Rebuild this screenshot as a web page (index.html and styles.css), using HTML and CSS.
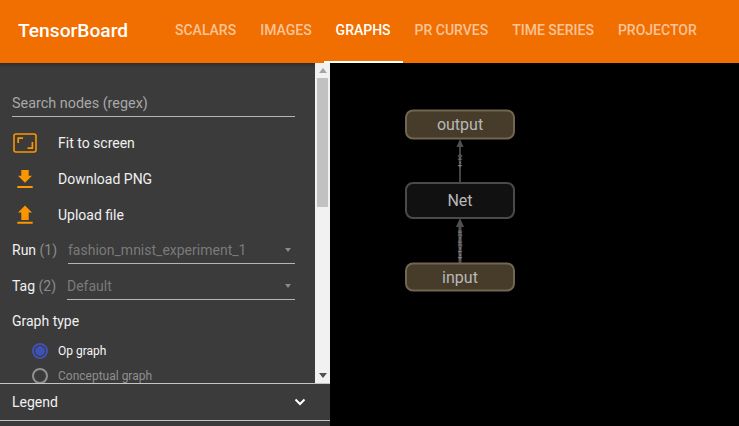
FILE: index.html
```html
<!DOCTYPE html>
<html lang="en">
<head>
<meta charset="utf-8">
<title>TensorBoard</title>
<link rel="stylesheet" href="styles.css">
</head>
<body>
<header class="topbar">
  <div class="brand">TensorBoard</div>
  <nav class="tabs">
    <a class="tab">SCALARS</a>
    <a class="tab">IMAGES</a>
    <a class="tab active">GRAPHS</a>
    <a class="tab">PR CURVES</a>
    <a class="tab">TIME SERIES</a>
    <a class="tab">PROJECTOR</a>
  </nav>
</header>
<main class="main">
  <aside class="sidebar">
    <div class="scroller">
      <div class="controls">
        <div class="search">Search nodes (regex)</div>
        <div class="action">
          <svg class="icon" width="26" height="20" viewBox="0 0 26 20"><rect x="1" y="1" width="22" height="18" rx="2" fill="none" stroke="#fb9600" stroke-width="1.6"/><path d="M5.200 10V5.200H10M19.400 9v6.200h-4.900" fill="none" stroke="#fb9600" stroke-width="1.700"/></svg>
          <span>Fit to screen</span>
        </div>
        <div class="action">
          <svg class="icon" width="26" height="20" viewBox="0 0 26 20"><path d="M8.300 1h7.400v5.800H19l-7 7-7-7h3.300z M4.300 17h15.400v2H4.300z" fill="#fb9600"/></svg>
          <span>Download PNG</span>
        </div>
        <div class="action">
          <svg class="icon" width="26" height="20" viewBox="0 0 26 20"><path d="M8.300 15h7.400V7.500H19L12 .500 5 7.500h3.300z M4.300 16.800h15.400v2H4.300z" fill="#fb9600"/></svg>
          <span>Upload file</span>
        </div>
        <div class="select-row first">
          <span class="select-label">Run <em>(1)</em></span>
          <div class="select run"><span>fashion_mnist_experiment_1</span><i class="caret"></i></div>
        </div>
        <div class="select-row tag">
          <span class="select-label">Tag <em>(2)</em></span>
          <div class="select"><span>Default</span><i class="caret"></i></div>
        </div>
        <div class="group-title">Graph type</div>
        <div class="radio checked"><i class="dot"></i><span>Op graph</span></div>
        <div class="radio"><i class="dot"></i><span>Conceptual graph</span></div>
      </div>
      <div class="scrollbar">
        <i class="arrow up"></i>
        <div class="track"><div class="thumb"></div></div>
        <i class="arrow down"></i>
      </div>
    </div>
    <div class="legend">
      <span>Legend</span>
      <svg width="12" height="8" viewBox="0 0 12 8"><path d="M1.500 1.500 6 6l4.500-4.500" fill="none" stroke="#fff" stroke-width="2"/></svg>
    </div>
  </aside>
  <section class="canvas">
    <svg class="graph" width="409" height="363" viewBox="330 63 409 363">
      <g class="edge">
        <path d="M460 182V144" stroke-width="1.7"/>
        <path d="M460 139l-3.500 8h7z" class="head"/>
        <path d="M460 263V224" stroke-width="3"/>
        <path d="M460 218l-4 9h8z" class="head"/>
      </g>
      <text class="edge-label" transform="translate(462 161) rotate(-90)">4×10</text>
      <text class="edge-label" transform="translate(462 245) rotate(-90)">4×1×28×28</text>
      <rect class="node io" x="406" y="110.500" width="108" height="28" rx="7"/>
      <text class="node-label" x="460" y="129.500">output</text>
      <rect class="node net" x="406" y="183" width="108" height="35" rx="7"/>
      <text class="node-label" x="460" y="205.500">Net</text>
      <rect class="node io" x="406" y="263.500" width="108" height="27" rx="7"/>
      <text class="node-label" x="460" y="282.500">input</text>
    </svg>
  </section>
</main>
</body>
</html>
```

FILE: styles.css
```css
* { box-sizing: border-box; }
html, body { margin: 0; height: 100%; overflow: hidden; }
body {
  font-family: Roboto, "Liberation Sans", sans-serif;
  background: #000;
  display: flex;
  flex-direction: column;
}
.topbar {
  height: 63px;
  flex: none;
  background: #f16e00;
  display: flex;
  align-items: stretch;
  position: relative;
  z-index: 1;
}
.brand {
  width: 163px;
  padding-left: 18px;
  color: #fff;
  font-size: 19.200px;
  font-weight: 500;
  line-height: 62px;
}
.tabs { display: flex; }
.tab {
  padding: 0 12px;
  font-size: 14px;
  font-weight: 500;
  line-height: 61px;
  color: rgba(255, 255, 255, 0.6);
}
.tab.active {
  color: #fff;
  border-bottom: 2px solid #fff;
}
.main { flex: 1; display: flex; min-height: 0; }
.sidebar {
  width: 330px;
  flex: none;
  background: #3b3b3b;
  display: flex;
  flex-direction: column;
  box-shadow: inset 0 4px 3px -2px rgba(0, 0, 0, 0.25);
}
.scroller { height: 320px; flex: none; display: flex; overflow: hidden; }
.controls { flex: 1; min-width: 0; padding: 24px 20px 0 12px; overflow: hidden; }
.search {
  height: 30px;
  padding-top: 8px;
  border-bottom: 1px solid #b5b5b5;
  color: #a8a8a8;
  font-size: 14.400px;
  line-height: 18px;
}
.action {
  height: 36px;
  display: flex;
  align-items: center;
  color: #f0f0f0;
  font-size: 14px;
}
.search + .action { margin-top: 8px; }
.icon { flex: none; margin: 0 19px 0 1px; }
.select-row {
  height: 36px;
  display: flex;
  color: #f0f0f0;
  font-size: 14px;
  line-height: 32px;
}
.select-row.first { margin-top: -5px; }
.select-label { width: 56px; flex: none; padding-top: 6px; }
.select-label em { font-style: normal; color: #8b8b8b; }
.select {
  flex: 1;
  display: flex;
  align-items: center;
  justify-content: space-between;
  height: 36px;
  padding: 8px 4px 0 0;
  border-bottom: 1px solid #b5b5b5;
  color: #7a7a7a;
}
.tag .select-label { width: 55px; }
.caret {
  border: 3.500px solid transparent;
  border-top: 4px solid #8a8a8a;
  border-bottom: 0;
}
.group-title { margin-top: 11px; color: #f0f0f0; font-size: 14px; line-height: 20px; }
.radio {
  display: flex;
  align-items: center;
  height: 25px;
  padding-left: 20px;
  color: #8f8f8f;
  font-size: 12px;
}
.group-title + .radio { margin-top: 6.500px; height: 26px; }
.radio span { margin-left: 10px; }
.radio.checked { color: #f5f5f5; }
.dot {
  width: 16px;
  height: 16px;
  flex: none;
  border-radius: 50%;
  border: 2px solid #909090;
}
.radio.checked .dot {
  border-color: #3f51b5;
  background: radial-gradient(circle, #3f51b5 0 4.500px, transparent 5px);
}
.scrollbar {
  width: 15px;
  flex: none;
  background: #f1f1f1;
  display: flex;
  flex-direction: column;
  align-items: center;
}
.arrow { flex: none; width: 0; height: 0; margin: 5px 0; border: 4px solid transparent; }
.arrow.up { border-top: 0; border-bottom: 5px solid #a3a3a3; }
.arrow.down { border-bottom: 0; border-top: 5px solid #505050; }
.track { flex: 1; width: 100%; }
.thumb { height: 129px; background: #c1c1c1; margin: 0 2px; }
.legend {
  height: 38px;
  flex: none;
  border-top: 1px solid #c4c4c4;
  border-bottom: 1px solid #c4c4c4;
  display: flex;
  align-items: center;
  justify-content: space-between;
  padding: 0 24px 0 12px;
  color: #f0f0f0;
  font-size: 14px;
}
.canvas { flex: 1; min-width: 0; background: #000; }
.graph { display: block; }
.node { stroke-width: 2; }
.node.io { fill: #473b29; stroke: #6f6753; }
.node.net { fill: #111; stroke: #4a4a4a; }
.node-label { fill: #b8b8b8; font-size: 16px; text-anchor: middle; }
.edge path { stroke: #505050; fill: none; }
.edge .head { fill: #505050; stroke: none; }
.edge-label { fill: #8a8a8a; font-size: 6px; text-anchor: middle; }
```
